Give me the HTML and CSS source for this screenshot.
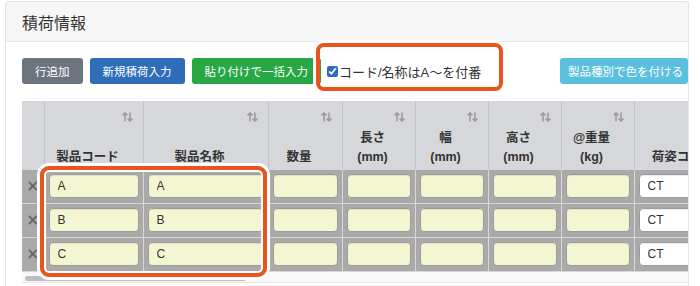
FILE: index.html
```html
<!DOCTYPE html>
<html lang="ja">

<head>
    <meta charset="UTF-8">
    <title>積荷情報</title>
    <link rel="stylesheet" href="styles.css">
</head>

<body>
    <div class="card">
        <div class="card-header">積荷情報</div>
        <div class="card-body">
            <div class="toolbar">
                <button class="btn btn-gray">行追加</button>
                <button class="btn btn-blue">新規積荷入力</button>
                <button class="btn btn-green">貼り付けで一括入力</button>
                <label class="check"><input type="checkbox" checked>コード/名称はA〜を付番</label>
                <button class="btn btn-info">製品種別で色を付ける</button>
                <div class="mark mark-check"></div>
            </div>

            <div class="grid-wrap">
                <table class="grid">
                    <colgroup>
                        <col style="width: 22px">
                        <col style="width: 99px">
                        <col style="width: 125px">
                        <col style="width: 74px">
                        <col style="width: 73px">
                        <col style="width: 73px">
                        <col style="width: 73px">
                        <col style="width: 73px">
                        <col style="width: 110px">
                    </colgroup>
                    <thead>
                        <tr>
                            <th class="del-col"></th>
                            <th><div class="th-in"><span class="sort"></span><span class="label">製品コード</span></div></th>
                            <th><div class="th-in"><span class="sort"></span><span class="label">製品名称</span></div></th>
                            <th><div class="th-in"><span class="sort"></span><span class="label">数量</span></div></th>
                            <th><div class="th-in"><span class="sort"></span><span class="label">長さ<br>(mm)</span></div></th>
                            <th><div class="th-in"><span class="sort"></span><span class="label">幅<br>(mm)</span></div></th>
                            <th><div class="th-in"><span class="sort"></span><span class="label">高さ<br>(mm)</span></div></th>
                            <th><div class="th-in"><span class="sort"></span><span class="label">@重量<br>(kg)</span></div></th>
                            <th><div class="th-in"><span class="label">荷姿コード</span></div></th>
                        </tr>
                    </thead>
                    <tbody id="rows"></tbody>
                </table>
                <div class="scroll"><div class="thumb"></div></div>
                <div class="mark mark-grid"></div>
            </div>
        </div>
    </div>

    <script>
        // sort icon, same for every sortable column
        const sortSvg = '<svg width="11" height="10" viewBox="0 0 11 10"><path d="M3 9.5V1M0.6 3.4L3 1L5.4 3.4M8 0.5V9M5.6 6.6L8 9L10.4 6.6" fill="none" stroke="#9a9a9a" stroke-width="1.5"/></svg>';
        document.querySelectorAll('.sort').forEach(el => el.innerHTML = sortSvg);

        const rows = ['A', 'B', 'C'];
        const tbody = document.getElementById('rows');

        rows.forEach(code => {
            const tr = document.createElement('tr');
            let html = '<td class="del-col">×</td>';
            html += '<td><input class="cell" value="' + code + '"></td>';
            html += '<td><input class="cell" value="' + code + '"></td>';
            for (let i = 0; i < 5; i++) {
                html += '<td><input class="cell" value=""></td>';
            }
            html += '<td><input class="cell white" value="CT"></td>';
            tr.innerHTML = html;
            tbody.appendChild(tr);
        });
    </script>
</body>

</html>
```

FILE: styles.css
```css
html,
body {
    overflow: hidden;
}

body {
    margin: 0;
    padding: 1px 0 0 5px;
    background: #fff;
    font-family: 'Liberation Sans', 'Noto Sans CJK JP', sans-serif;
    color: #333;
}

.card {
    width: 684px;
    height: 285px;
    box-sizing: border-box;
    border: 1px solid #e2e2e2;
    border-bottom: none;
    border-radius: 4px 4px 0 0;
    overflow: hidden;
}

.card-header {
    height: 39px;
    display: flex;
    align-items: center;
    padding-left: 16px;
    background: #f6f6f6;
    border-bottom: 1px solid #e4e4e4;
    font-family: 'Noto Sans CJK JP', sans-serif;
    font-size: 16px;
    color: #333;
}

.card-body {
    padding: 16px 0 0 16px;
}

.toolbar {
    position: relative;
    display: flex;
    align-items: center;
    gap: 7px;
    height: 26px;
}

.btn {
    height: 26px;
    padding: 0 13px;
    border: none;
    border-radius: 3px;
    color: #fff;
    font-family: 'Noto Sans CJK JP', sans-serif;
    font-size: 11.5px;
    line-height: 26px;
    white-space: nowrap;
    flex-shrink: 0;
}

.btn-gray {
    background: #6c757d;
}

.btn-blue {
    background: #2e6db8;
}

.btn-green {
    background: #28a745;
}

.btn-info {
    background: #5bc0de;
    margin-left: auto;
    padding: 0 8px;
    width: 128px;
}

.check {
    display: flex;
    align-items: center;
    margin-left: -1px;
    font-size: 13px;
    color: #333;
    white-space: nowrap;
}

.check input {
    width: 11px;
    height: 11px;
    margin: 0 1px 0 0;
    accent-color: #2d6cc4;
}

/* orange annotation frames */
.mark {
    position: absolute;
    border: 4px solid #e9541c;
    border-radius: 8px;
    box-shadow: 0 0 0 3px #fff;
    pointer-events: none;
    box-sizing: border-box;
}

.mark-check {
    left: 294px;
    top: -15px;
    width: 187px;
    height: 48px;
}

.mark-grid {
    left: 18px;
    top: 65px;
    width: 227px;
    height: 111px;
    border-radius: 9px;
    box-shadow: 0 0 0 3px #fff, inset 0 0 0 2px #fff;
}

.grid-wrap {
    position: relative;
    margin-top: 17px;
    overflow: hidden;
}

.grid {
    border-collapse: collapse;
    table-layout: fixed;
    width: 722px;
}

.grid thead tr {
    height: 69px;
}

.grid th {
    background: #d5d7da;
    border-right: 1px solid #c3c5c8;
    padding: 11px 10px 3px 4px;
    vertical-align: top;
    font-family: 'Liberation Sans', 'Noto Sans CJK JP', sans-serif;
    font-weight: bold;
    font-size: 12.5px;
    color: #333;
}

.th-in {
    height: 55px;
    display: flex;
    flex-direction: column;
    justify-content: space-between;
}

.sort {
    align-self: flex-end;
    height: 10px;
    line-height: 0;
}

.label {
    margin-top: auto;
    padding-right: 6px;
    text-align: center;
    line-height: 19px;
    white-space: nowrap;
}

.grid td {
    background: #aaaaaa;
    border: 1px solid #d8d8d8;
    padding: 4px 4px 5px;
}

.grid tbody tr:first-child td {
    border-top: none;
}

.grid td.del-col {
    padding: 0 0 2px;
    text-align: center;
    color: #666;
    font-family: 'DejaVu Sans', sans-serif;
    font-weight: bold;
    font-size: 15px;
    border-left: none;
}

.cell {
    display: block;
    box-sizing: border-box;
    width: 100%;
    height: 24px;
    margin: 0;
    padding: 0 8px;
    border: 1px solid #9c9c9c;
    border-radius: 4px;
    background: #f4f6d2;
    box-shadow: inset 0 1px 1px rgba(0, 0, 0, 0.08);
    font-family: 'Liberation Sans', sans-serif;
    font-size: 12px;
    color: #333;
}

.cell.white {
    background: #fff;
}

.scroll {
    height: 11px;
    background: #f8f8f8;
    border-bottom: 1px solid #e6e6e6;
    display: flex;
    align-items: flex-end;
    padding: 0 0 1px 3px;
    box-sizing: border-box;
}

.thumb {
    width: 221px;
    height: 5px;
    border-radius: 3px;
    background: #bdbdbd;
}
```
